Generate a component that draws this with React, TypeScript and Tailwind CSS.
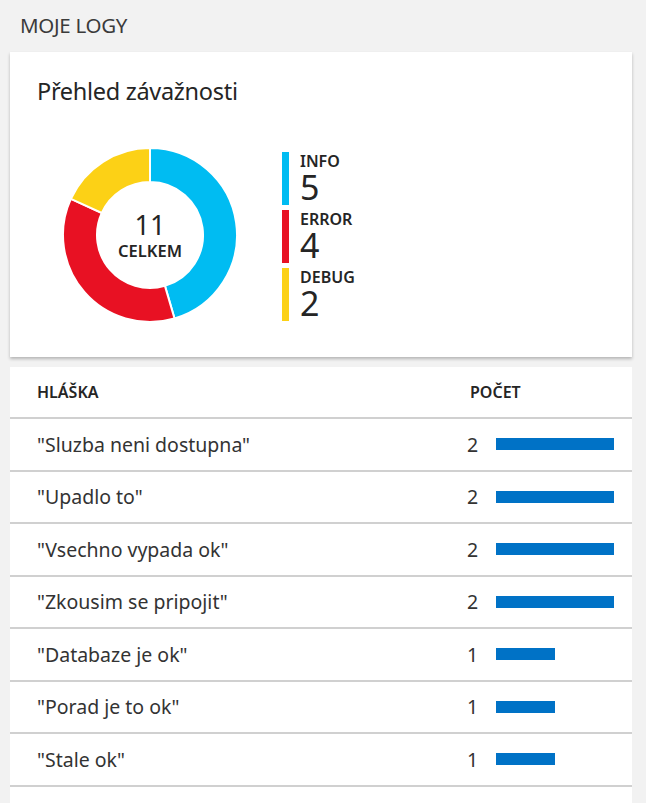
import React from "react";

const severities = [
  { label: "INFO", count: 5, color: "#00bcf2" },
  { label: "ERROR", count: 4, color: "#e81123" },
  { label: "DEBUG", count: 2, color: "#fcd116" },
];

const messages = [
  { text: '"Sluzba neni dostupna"', count: 2 },
  { text: '"Upadlo to"', count: 2 },
  { text: '"Vsechno vypada ok"', count: 2 },
  { text: '"Zkousim se pripojit"', count: 2 },
  { text: '"Databaze je ok"', count: 1 },
  { text: '"Porad je to ok"', count: 1 },
  { text: '"Stale ok"', count: 1 },
];

const Donut = () => {
  const total = severities.reduce((s, x) => s + x.count, 0);
  const cx = 87;
  const cy = 87;
  const rOut = 87;
  const rIn = 53;
  let start = 0;

  const point = (r: number, a: number) => {
    const rad = ((a - 90) * Math.PI) / 180;
    return [cx + r * Math.cos(rad), cy + r * Math.sin(rad)];
  };

  return (
    <svg width="174" height="174" viewBox="0 0 174 174">
      {severities.map((s) => {
        const end = start + (s.count / total) * 360;
        const large = end - start > 180 ? 1 : 0;
        const [x1, y1] = point(rOut, start);
        const [x2, y2] = point(rOut, end);
        const [x3, y3] = point(rIn, end);
        const [x4, y4] = point(rIn, start);
        const d = `M${x1} ${y1} A${rOut} ${rOut} 0 ${large} 1 ${x2} ${y2} L${x3} ${y3} A${rIn} ${rIn} 0 ${large} 0 ${x4} ${y4} Z`;
        const seg = <path key={s.label} d={d} fill={s.color} stroke="#fff" strokeWidth="2" />;
        start = end;
        return seg;
      })}
    </svg>
  );
};

export default function App() {
  return (
    <div
      className="min-h-screen bg-[#f2f2f2] pt-[11px] text-[#333]"
      style={{ fontFamily: '"Noto Sans", "Open Sans", sans-serif' }}
    >
      <h1 className="pl-[20px] text-[20.5px] leading-[28px] text-[#3b3b3b] tracking-[-0.3px]">MOJE LOGY</h1>

      <div className="ml-[10px] mr-[14px] mt-[13px] h-[305px] bg-white shadow-[0_2px_3px_rgba(0,0,0,0.25)]">
        <h2 className="pl-[27px] pt-[23px] text-[23.5px] leading-[32px] text-[#252525] tracking-[-0.3px]">
          Přehled závažnosti
        </h2>
        <div className="mt-[41px] flex items-start">
          <div className="relative ml-[53px] h-[174px] w-[174px]">
            <Donut />
            <div className="absolute inset-0 flex flex-col items-center justify-center pt-[2px]">
              <span className="text-[27px] leading-[30px] text-[#252525]">11</span>
              <span className="text-[16.5px] font-semibold leading-[22px] text-[#252525]">CELKEM</span>
            </div>
          </div>
          <div className="ml-[45px] mt-[4px] flex flex-col gap-[5px]">
            {severities.map((s) => (
              <div key={s.label} className="flex h-[53px]">
                <div className="w-[7px]" style={{ backgroundColor: s.color }} />
                <div className="ml-[11px] flex flex-col">
                  <span className="pt-[1px] text-[16px] font-semibold leading-[16px] text-[#252525]">{s.label}</span>
                  <span className="text-[34px] leading-[36px] text-[#252525]">{s.count}</span>
                </div>
              </div>
            ))}
          </div>
        </div>
      </div>

      <div className="ml-[10px] mr-[14px] mt-[10px] bg-white pb-[40px]">
        <div className="flex h-[52px] items-center border-b-2 border-[#d0d0d0] px-[27px] text-[16px] font-semibold text-[#252525]">
          <div className="flex-1">HLÁŠKA</div>
          <div className="w-[145px] pl-[10px]">POČET</div>
        </div>
        {messages.map((m) => (
          <div
            key={m.text}
            className="flex h-[52.5px] items-center border-b-2 border-[#d0d0d0] pl-[27px] pr-[18px] text-[19.5px] text-[#333]"
          >
            <div className="flex-1">{m.text}</div>
            <div className="w-[29px]">{m.count}</div>
            <div className="w-[118px]">
              <div className="h-[12px] bg-[#0072c6]" style={{ width: `${(m.count / 2) * 118}px` }} />
            </div>
          </div>
        ))}
      </div>
    </div>
  );
}
